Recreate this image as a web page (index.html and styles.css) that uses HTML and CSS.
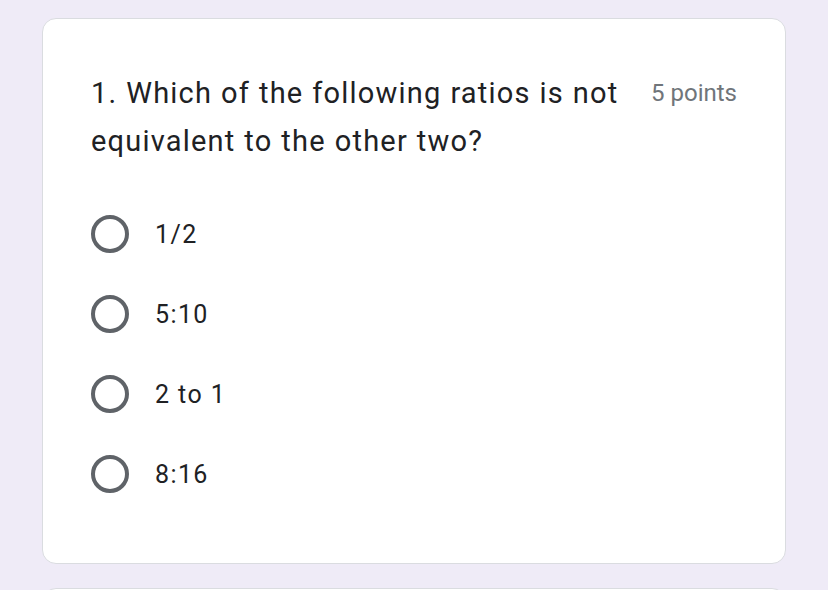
FILE: index.html
```html
<!DOCTYPE html>
<html>
<head>
<meta charset="utf-8">
<link rel="stylesheet" href="styles.css">
</head>
<body>
<div class="card">
  <div class="head">
    <div class="question">1. Which of the following ratios is not equivalent to the other two?</div>
    <div class="points">5 points</div>
  </div>
  <div class="options">
    <div class="option"><span class="radio"></span><span class="label">1/2</span></div>
    <div class="option"><span class="radio"></span><span class="label">5:10</span></div>
    <div class="option"><span class="radio"></span><span class="label">2 to 1</span></div>
    <div class="option"><span class="radio"></span><span class="label">8:16</span></div>
  </div>
</div>
<div class="peek"><div class="card next"></div></div>
</body>
</html>
```
FILE: styles.css
```css
html, body {
  margin: 0;
  padding: 0;
  overflow: hidden;
}
body {
  background: #efebf7;
  font-family: Roboto, "Liberation Sans", sans-serif;
  padding: 18px 42px 0 42px;
  height: 590px;
  box-sizing: border-box;
}
.card {
  background: #fff;
  border: 1px solid #dadce0;
  border-radius: 14px;
  box-sizing: border-box;
  height: 546px;
  padding: 50px 48px 0 48px;
}
.peek {
  margin-top: 24px;
  height: 2px;
  overflow: hidden;
}
.card.next {
  height: 40px;
}
.head {
  display: flex;
  align-items: flex-start;
  justify-content: space-between;
}
.question {
  font-size: 29px;
  letter-spacing: 1.2px;
  word-spacing: 0.5px;
  line-height: 48px;
  color: #202124;
  width: 545px;
}
.points {
  font-size: 24px;
  line-height: 48px;
  color: #70757a;
  white-space: nowrap;
}
.options {
  margin-top: 49px;
  display: flex;
  flex-direction: column;
  gap: 40px;
}
.option {
  display: flex;
  align-items: center;
  height: 40px;
}
.radio {
  width: 38px;
  height: 38px;
  box-sizing: border-box;
  border: 4px solid #5f6368;
  border-radius: 50%;
  flex: none;
}
.label {
  margin-left: 26px;
  font-size: 25px;
  letter-spacing: 1.4px;
  color: #202124;
}
```
